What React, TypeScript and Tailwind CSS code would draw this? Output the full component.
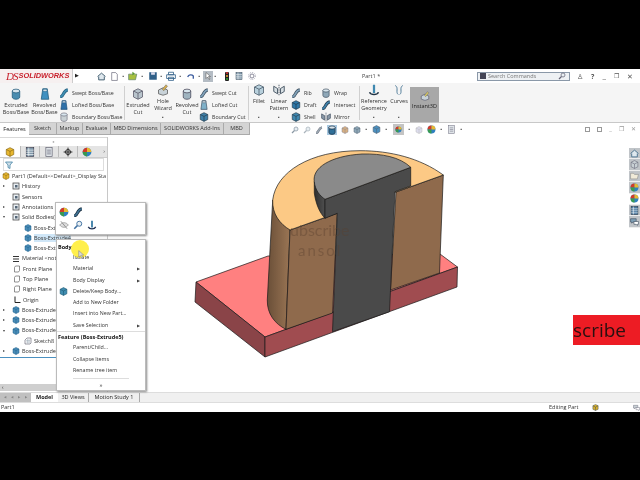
import React from "react";

type K = "cube" | "cyl" | "tube" | "loft" | "hole" | "ball" | "list" | "lens" | "cross" | "flat" | "folder" | "home" | "chat" | "curve" | "mirror" | "eye" | "anchor";
type P = { c?: string; d?: string; k?: K };
const Glyph = ({ c = "#3f7fa8", d = "#1f4f70", k = "cube" }: P) => {
  const box = "w-full h-full block";
  switch (k) {
    case "cyl":
      return <svg viewBox="0 0 16 16" className={box}><path d="M3 4V12C3 16 13 16 13 12V4Z" fill={c} stroke={d} /><ellipse cx="8" cy="4" rx="5" ry="2.5" fill="#d8e6ee" stroke={d} /></svg>;
    case "tube":
      return <svg viewBox="0 0 16 16" className={box}><path d="M2 14C8 14 6 4 14 3" fill="none" stroke={d} strokeWidth="5" /><path d="M2 14C8 14 6 4 14 3" fill="none" stroke={c} strokeWidth="3" /></svg>;
    case "loft":
      return <svg viewBox="0 0 16 16" className={box}><path d="M5 1H11L13 15H3Z" fill={c} stroke={d} /><ellipse cx="8" cy="3" rx="3" ry="1.5" fill="#e8eef2" stroke={d} strokeWidth=".7" /></svg>;
    case "hole":
      return <svg viewBox="0 0 16 16" className={box}><path d="M2 8 8 5 14 8V13L8 15 2 13Z" fill="#c8d2d8" stroke={d} /><path d="M7 7 12 1 14 3 9 9Z" fill={c} stroke={d} strokeWidth=".6" /></svg>;
    case "ball":
      return <svg viewBox="0 0 16 16" className={box}><circle cx="8" cy="8" r="7" fill="#2f80c0" /><path d="M8 8V1A7 7 0 0 0 1 8Z" fill="#d03a2a" /><path d="M8 8V1A7 7 0 0 1 15 8Z" fill="#e8b830" /><path d="M8 8H1A7 7 0 0 0 8 15Z" fill="#3a9a50" /></svg>;
    case "list":
      return <svg viewBox="0 0 16 16" className={box}><rect x="2" y="1" width="12" height="14" fill={c} stroke={d} /><path d="M6 1V15M2 5H14M2 8.5H14M2 12H14" stroke="#fff" /></svg>;
    case "lens":
      return <svg viewBox="0 0 16 16" className={box}><circle cx="10" cy="6" r="4" fill="#e8eef2" stroke={d} strokeWidth="1.5" /><path d="M7 9 2 14" stroke={d} strokeWidth="2.4" /></svg>;
    case "cross":
      return <svg viewBox="0 0 16 16" className={box}><circle cx="8" cy="8" r="4" fill="none" stroke="#222" strokeWidth="1.5" /><path d="M8 1V15M1 8H15" stroke="#222" strokeWidth="1.5" /></svg>;
    case "flat":
      return <svg viewBox="0 0 16 16" className={box}><rect x="3" y="1" width="10" height="14" fill="#dfe4e8" stroke={d} /><path d="M5 5H11M5 8H11M5 11H11" stroke={d} /></svg>;
    case "folder":
      return <svg viewBox="0 0 16 16" className={box}><path d="M1 4H6L8 6H15L13 14H1Z" fill={c} stroke={d} /></svg>;
    case "home":
      return <svg viewBox="0 0 16 16" className={box}><path d="M1 8 8 2 15 8M3 8V14H13V8" fill="#dfe8ee" stroke={d} strokeWidth="1.5" /></svg>;
    case "chat":
      return <svg viewBox="0 0 16 16" className={box}><path d="M1 3H11V9H5L3 11V9H1Z" fill={c} stroke={d} /><path d="M7 8H15V13H13V15L11 13H7Z" fill="#fff" stroke={d} /></svg>;
    case "curve":
      return <svg viewBox="0 0 16 16" className={box}><path d="M3 2C8 5 3 11 7 14M13 2C8 5 13 11 9 14" fill="none" stroke={d} strokeWidth="1.2" /></svg>;
    case "mirror":
      return <svg viewBox="0 0 16 16" className={box}><path d="M1 3 6 6V13L1 10ZM15 3 10 6V13L15 10Z" fill={c} stroke={d} /><path d="M8 1V15" stroke={d} strokeDasharray="2 1" /></svg>;
    case "eye":
      return <svg viewBox="0 0 16 16" className={box}><path d="M1 8C5 3 11 3 15 8C11 13 5 13 1 8Z" fill="#ddd" stroke="#888" /><path d="M3 2 13 14" stroke="#888" strokeWidth="1.4" /></svg>;
    case "anchor":
      return <svg viewBox="0 0 16 16" className={box}><path d="M8 1V12" stroke={c} strokeWidth="3" /><path d="M2 11C4 15 12 15 14 11" fill="none" stroke={d} strokeWidth="2" /></svg>;
    default:
      return <svg viewBox="0 0 16 16" className={box}><path d="M8 1 14 4 14 12 8 15 2 12 2 4Z" fill={c} stroke={d} strokeWidth="1" /><path d="M2 4 8 7 14 4M8 7V15" fill="none" stroke={d} strokeWidth="1" /></svg>;
  }
};
const Dot = ({ m = "" }: { m?: string }) => <span className={`${m} w-[3px] shrink-0 text-[5px] leading-[5px] text-[#555] text-center`}>▪</span>;
const I = ({ c, d, k, s = "w-[10px] h-[10px]" }: P & { s?: string }) => (
  <span className={`${s} shrink-0 block`}><Glyph c={c} d={d} k={k} /></span>
);
const Big = ({ w, lines, c, d, k, dot, pt = "pt-[5px]" }: P & { w: string; lines: string[]; dot?: boolean; pt?: string }) => (
  <div className={`${w} ${pt} shrink-0 h-full flex flex-col items-center`}>
    <I c={c} d={d} k={k} s="w-[12px] h-[12px]" />
    <div className="mt-[2px] text-center leading-[6.8px] whitespace-nowrap">
      {lines.map((l) => <div key={l}>{l}</div>)}
    </div>
    {dot && <div className="mt-auto mb-[2px] flex"><Dot /></div>}
  </div>
);
const Col = ({ w, items }: { w: string; items: [string, string, string, K][] }) => (
  <div className={`${w} shrink-0 flex flex-col gap-[2px] pt-[5px] h-full text-[5.25px]`}>
    {items.map(([t, c, d, k]) => (
      <div key={t} className="h-[10px] flex items-center gap-[3px] whitespace-nowrap"><I c={c} d={d} k={k} />{t}</div>
    ))}
  </div>
);
const Sep = () => <div className="w-px h-[34px] self-center bg-[#d0d0d0] shrink-0" />;

const tabs: [string, string][] = [
  ["Sketch", "w-[28px]"], ["Markup", "w-[26px]"], ["Evaluate", "w-[28px]"],
  ["MBD Dimensions", "w-[50px]"], ["SOLIDWORKS Add-Ins", "w-[63px]"], ["MBD", "w-[26px]"],
];

type RowIcon = "folder" | "cube" | "plane" | "part" | "origin" | "mat" | "sketch";
const Row = ({ ind, arrow, icon, text, sel }: { ind: string; arrow?: string; icon: RowIcon; text: string; sel?: boolean }) => (
  <div className={`h-[10.3px] flex items-center whitespace-nowrap ${ind}`}>
    {arrow && <span className="w-[9px] shrink-0 text-[4px] text-[#444]">{arrow}</span>}
    <span className="w-[8px] h-[8px] shrink-0 block mr-[2px]">
      {icon === "cube" && <Glyph c="#4a8db8" d="#1f5f88" />}
      {icon === "part" && <Glyph c="#e8b830" d="#806010" />}
      {icon === "folder" && <svg viewBox="0 0 16 16" className="w-full h-full"><rect x="2" y="2" width="12" height="12" fill="#e8eef2" stroke="#444" strokeWidth="1.5" /><rect x="6" y="6" width="5" height="5" fill="#567" /></svg>}
      {icon === "plane" && <svg viewBox="0 0 16 16" className="w-full h-full"><path d="M5 2H13V11L11 14H3V5Z" fill="#fff" stroke="#555" strokeWidth="1.3" /></svg>}
      {icon === "sketch" && <svg viewBox="0 0 16 16" className="w-full h-full"><path d="M6 2H14V12L12 14H2V6Z" fill="#fff" stroke="#556" strokeWidth="1.2" /><path d="M4 7H12M4 10H12M7 4V13M10 4V13" stroke="#89a" strokeWidth=".8" /></svg>}
      {icon === "origin" && <svg viewBox="0 0 16 16" className="w-full h-full"><path d="M4 1V13H15" fill="none" stroke="#222" strokeWidth="2" /></svg>}
      {icon === "mat" && <svg viewBox="0 0 16 16" className="w-full h-full"><path d="M2 3H14M2 8H14M2 13H14" stroke="#333" strokeWidth="2" /></svg>}
    </span>
    <span className={sel ? "bg-[#cfe6f7]" : ""}>{text}</span>
  </div>
);

const Item = ({ t, arrow, icon }: { t: string; arrow?: boolean; icon?: boolean }) => (
  <div className="h-[11.3px] flex items-center pl-[16px] pr-[5px] whitespace-nowrap relative text-[5.3px]">
    {icon && <span className="absolute left-[2px] w-[9px] h-[9px]"><Glyph c="#3f8db0" d="#1d5570" /></span>}
    <span className="flex-1">{t}</span>
    {arrow && <span className="text-[4px] text-[#444]">▶</span>}
  </div>
);

const side: [string, string, K][] = [
  ["#dfe8ee", "#3f6a88", "home"], ["#c8d0d4", "#667", "cube"], ["#f0ead8", "#888", "folder"],
  ["#c8a840", "#665", "ball"], ["", "", "ball"], ["#4878a0", "#234", "list"], ["#7f9fb5", "#345", "chat"],
];

export default function App() {
  return (
    <div className="w-[640px] h-[480px] bg-black flex flex-col pt-[69px] pb-[68px] font-['Open_Sans',sans-serif] text-[5.5px] text-[#333] overflow-hidden">
      <div className="flex-1 bg-white flex flex-col min-h-0 blur-[0.35px]">
        {/* title bar */}
        <div className="h-[14px] shrink-0 bg-white flex items-center">
          <div className="w-[73px] h-full shrink-0 bg-[#f6f0f0] flex items-center pl-[6px] border-r border-[#ccc]">
            <span className="text-[#c8202c] italic text-[11px] font-['Liberation_Serif',serif] tracking-[-1px] leading-none">DS</span>
            <span className="text-[#c8202c] italic text-[7.4px] font-bold font-['Liberation_Sans',sans-serif] ml-[1px] leading-none">SOLIDWORKS</span>
          </div>
          <span className="ml-[2px] w-[5px] text-[5px] text-[#222]">▶</span>
          <div className="flex items-center">
            <I k="home" d="#2b4a5e" s="ml-[17px] w-[9px] h-[9px]" />
            <svg viewBox="0 0 16 16" className="ml-[4px] w-[9px] h-[9px]"><path d="M3 1H10L13 4V15H3Z" fill="#fff" stroke="#667" strokeWidth="1.2" /></svg>
            <Dot m="ml-[3px]" />
            <svg viewBox="0 0 16 16" className="ml-[3px] w-[10px] h-[10px]"><path d="M1 5H14L12 14H1Z" fill="#a8c040" stroke="#576" strokeWidth="1" /><path d="M7 1 11 4 7 7Z" fill="#5a9a30" /></svg>
            <Dot m="ml-[3px]" />
            <svg viewBox="0 0 16 16" className="ml-[4px] w-[10px] h-[10px]"><rect x="2" y="2" width="12" height="12" fill="#2f5f88" /><rect x="5" y="2" width="6" height="4" fill="#dde" /></svg>
            <Dot m="ml-[2px]" />
            <svg viewBox="0 0 16 16" className="ml-[3px] w-[10px] h-[10px]"><path d="M4 2H12V6H4ZM1 6H15V12H1ZM4 10H12V15H4Z" fill="#fff" stroke="#2f5f88" strokeWidth="1.3" /></svg>
            <Dot m="ml-[3px]" />
            <svg viewBox="0 0 16 16" className="ml-[4px] w-[9px] h-[9px]"><path d="M3 9A6 6 0 0 1 13 7V12" fill="none" stroke="#3f5fa0" strokeWidth="2.4" /></svg>
            <Dot m="ml-[3px]" />
            <div className="ml-[2px] w-[10px] h-[11px] bg-[#b4bcc4] flex items-center justify-center">
              <svg viewBox="0 0 16 16" className="w-[8px] h-[8px]"><path d="M4 1V13L7 10 10 15 12 14 9 9H13Z" fill="#fff" stroke="#444" strokeWidth="1" /></svg>
            </div>
            <Dot m="ml-px" />
            <span className="ml-[8px] w-[4px] h-[9px] rounded-[1px] bg-[#222] flex flex-col items-center justify-around">
              <span className="w-[2px] h-[2px] rounded-full bg-[#d33]" /><span className="w-[2px] h-[2px] rounded-full bg-[#ea3]" /><span className="w-[2px] h-[2px] rounded-full bg-[#3a3]" />
            </span>
            <I k="list" c="#7f98aa" d="#345" s="ml-[6px] w-[8px] h-[8px]" />
            <svg viewBox="0 0 16 16" className="ml-[5px] w-[8px] h-[8px]"><circle cx="8" cy="8" r="4" fill="none" stroke="#889" strokeWidth="2" /><circle cx="8" cy="8" r="7" fill="none" stroke="#889" strokeWidth="1.4" strokeDasharray="2 2" /></svg>
          </div>
          <span className="ml-[106px] w-[18px] shrink-0 whitespace-nowrap text-[#444]">Part1 *</span>
          <div className="ml-[97px] w-[93px] h-[9px] shrink-0 border border-[#8a98a8] bg-[#eef1f4] flex items-center text-[#777]">
            <span className="w-[6px] h-[6px] bg-[#445] mx-[2px]" />
            <span>Search Commands</span>
            <I k="lens" d="#667" s="ml-auto mr-[3px] w-[8px] h-[8px]" />
          </div>
          <div className="flex-1 flex items-center justify-around px-[3px] text-[#555] text-[8px] leading-none">
            <span className="text-[7px]">♙</span><span className="text-[7px] font-bold">?</span><span>_</span><span className="text-[6px]">❐</span><span className="text-[7px]">✕</span>
          </div>
        </div>

        {/* ribbon */}
        <div className="h-[40px] shrink-0 bg-[#f5f5f5] flex pl-[2px] border-b border-[#c8c8c8] leading-[7px]">
          <Big w="w-[28px]" lines={["Extruded", "Boss/Base"]} c="#4a8db0" d="#205a7a" k="cyl" />
          <Big w="w-[29px]" lines={["Revolved", "Boss/Base"]} c="#3f90c0" d="#205a7a" k="loft" />
          <Col w="w-[65px]" items={[["Swept Boss/Base", "#3f8db0", "#205a7a", "tube"], ["Lofted Boss/Base", "#2f70a8", "#1a4a70", "loft"], ["Boundary Boss/Base", "#c8d0d4", "#667", "cyl"]]} />
          <Sep />
          <Big w="w-[26px]" lines={["Extruded", "Cut"]} c="#b8c4cc" d="#556" k="cube" />
          <Big w="w-[24px]" lines={["Hole", "Wizard"]} c="#d8b050" d="#555" k="hole" dot pt="pt-[1px]" />
          <Big w="w-[24px]" lines={["Revolved", "Cut"]} c="#9fb4c0" d="#445" k="cyl" />
          <Col w="w-[49px]" items={[["Swept Cut", "#7fa0b8", "#345", "tube"], ["Lofted Cut", "#7fb0c8", "#345", "loft"], ["Boundary Cut", "#3f80a8", "#234", "cube"]]} />
          <Sep />
          <Big w="w-[20px]" lines={["Fillet"]} c="#b8d0dc" d="#456" dot pt="pt-[1px]" />
          <Big w="w-[20px]" lines={["Linear", "Pattern"]} c="#d8e0e4" d="#234" k="mirror" dot pt="pt-[1px]" />
          <div className="w-[2px] shrink-0" />
          <Col w="w-[30px]" items={[["Rib", "#7f9fb5", "#345", "tube"], ["Draft", "#2f78a8", "#234", "cube"], ["Shell", "#3f88b0", "#234", "cube"]]} />
          <Col w="w-[38px]" items={[["Wrap", "#8fa8b8", "#345", "cyl"], ["Intersect", "#3f80a8", "#234", "tube"], ["Mirror", "#8898a8", "#345", "mirror"]]} />
          <Sep />
          <Big w="w-[28px]" lines={["Reference", "Geometry"]} c="#3f88b0" d="#234" k="anchor" dot pt="pt-[1px]" />
          <Big w="w-[22px]" lines={["Curves"]} d="#3f6f90" k="curve" dot pt="pt-[1px]" />
          <div className="w-[29px] shrink-0 bg-[#a8a8a8] flex flex-col items-center pt-[4px] mt-[4px] text-[#222]">
            <I c="#d8c860" d="#556" k="hole" />
            <span className="mt-[2px]">Instant3D</span>
          </div>
        </div>

        {/* tabs + view toolbar */}
        <div className="h-[14px] shrink-0 flex">
          <div className="flex h-[12px]">
            <div className="w-[29px] bg-white flex items-center justify-center text-[#222]">Features</div>
            {tabs.map(([t, w]) => (
              <div key={t} className={`${w} bg-[#d4d4d4] border-r border-[#aaa] border-b flex items-center justify-center whitespace-nowrap`}>{t}</div>
            ))}
          </div>
          <div className="ml-[41px] flex items-center gap-[4px] h-[13px]">
            <I k="lens" d="#8a98a4" s="w-[8px] h-[8px]" />
            <I k="lens" d="#aab4bc" s="w-[8px] h-[8px]" />
            <I k="tube" c="#9aa8b0" d="#778" s="w-[8px] h-[8px]" />
            <span className="w-[10px] h-[10px] bg-[#a8c8e0] flex"><I k="cyl" c="#2f6f98" d="#123" s="w-[10px] h-[10px]" /></span>
            <I c="#d8b080" d="#889" s="w-[8px] h-[8px]" />
            <I c="#8fa8b8" d="#567" s="w-[8px] h-[8px]" />
            <Dot />
            <I c="#4a90c0" d="#567" s="w-[9px] h-[9px]" />
            <Dot />
            <span className="ml-[1px] w-[11px] h-[11px] bg-[#c4c4c4] flex items-center justify-center"><I c="#555" d="#333" k="ball" s="w-[7px] h-[7px]" /></span>
            <Dot />
            <I c="#dde" d="#bbb" s="w-[8px] h-[8px]" />
            <I k="ball" s="w-[9px] h-[9px]" />
            <Dot />
            <I c="#b8c4cc" d="#778" k="flat" s="w-[9px] h-[9px]" />
            <Dot />
          </div>
          <div className="ml-auto mr-[4px] flex items-center gap-[7px] text-[#999] text-[6px] h-[13px]">
            <span className="w-[5px] h-[5px] border border-[#999]" /><span className="w-[5px] h-[5px] border border-[#999]" /><span>_</span><span>❐</span><span>✕</span>
          </div>
        </div>

        {/* main */}
        <div className="flex-1 min-h-0 flex relative">
          <div className="w-[108px] shrink-0 border-r border-[#c8c8c8] flex flex-col">
            <div className="h-[9px] shrink-0 border-t border-[#d8d8d8] flex items-center justify-center text-[#aaa] text-[4px]">●</div>
            <div className="h-[12px] shrink-0 flex bg-[#e4e4e4] border-b border-[#ccc]">
              <span className="w-[20px] bg-white flex items-center justify-center"><I c="#e8b830" d="#806010" /></span>
              <span className="w-[19px] border-l border-[#bbb] flex items-center justify-center"><I k="list" c="#7f98aa" d="#334" /></span>
              <span className="w-[19px] border-l border-[#bbb] flex items-center justify-center"><I k="flat" d="#556" /></span>
              <span className="w-[19px] border-l border-[#bbb] flex items-center justify-center"><I k="cross" /></span>
              <span className="w-[19px] border-l border-[#bbb] flex items-center justify-center"><I k="ball" /></span>
              <span className="ml-auto mr-[2px] self-center text-[#555] text-[6px]">›</span>
            </div>
            <div className="h-[13px] shrink-0 mx-[3px] border border-[#ddd] flex items-center pl-[1px]">
              <svg viewBox="0 0 16 16" className="w-[8px] h-[8px]"><path d="M1 2H15L10 8V15L6 13V8Z" fill="#cfe0ea" stroke="#3f7fa0" strokeWidth="1.5" /></svg>
            </div>
            <div className="flex-1 min-h-0 overflow-hidden">
              <Row ind="pl-[2px]" icon="part" text="Part1 (Default<<Default>_Display Sta" />
              <Row ind="pl-[3px]" arrow="▸" icon="folder" text="History" />
              <Row ind="pl-[12px]" icon="folder" text="Sensors" />
              <Row ind="pl-[3px]" arrow="▸" icon="folder" text="Annotations" />
              <Row ind="pl-[3px]" arrow="▾" icon="folder" text="Solid Bodies(3)" />
              <Row ind="pl-[24px]" icon="cube" text="Boss-Extrude1" />
              <Row ind="pl-[24px]" icon="cube" text="Boss-Extrude4" sel />
              <Row ind="pl-[24px]" icon="cube" text="Boss-Extrude5" />
              <Row ind="pl-[12px]" icon="mat" text="Material <not specified>" />
              <Row ind="pl-[13px]" icon="plane" text="Front Plane" />
              <Row ind="pl-[13px]" icon="plane" text="Top Plane" />
              <Row ind="pl-[13px]" icon="plane" text="Right Plane" />
              <Row ind="pl-[13px]" icon="origin" text="Origin" />
              <Row ind="pl-[3px]" arrow="▸" icon="cube" text="Boss-Extrude1" />
              <Row ind="pl-[3px]" arrow="▸" icon="cube" text="Boss-Extrude3" />
              <Row ind="pl-[3px]" arrow="▾" icon="cube" text="Boss-Extrude4" />
              <Row ind="pl-[24px]" icon="sketch" text="Sketch8" />
              <Row ind="pl-[3px]" arrow="▸" icon="cube" text="Boss-Extrude5" />
              <div className="h-px bg-[#4a90c0] mt-[1px]" />
            </div>
            <div className="h-[7px] shrink-0 bg-[#cfcfcf] mb-[1px] text-[5px] leading-[7px] text-[#222] pl-[2px]">‹</div>
          </div>

          {/* viewport */}
          <div className="flex-1 relative bg-white flex flex-col items-end pt-[11px]">
            <svg viewBox="108 137 532 256" className="absolute left-0 top-0 w-[532px] h-[256px]">
              <defs>
                <linearGradient id="side" x1="0" x2="1" y1="0" y2="0">
                  <stop offset="0" stopColor="#6a4f38" />
                  <stop offset="1" stopColor="#9a7554" />
                </linearGradient>
                <linearGradient id="head" x1="0" x2="1" y1="0" y2="0">
                  <stop offset="0" stopColor="#2e2e2e" />
                  <stop offset="1" stopColor="#505050" />
                </linearGradient>
              </defs>
              <g stroke="#1a1a1a" strokeWidth="0.7" strokeLinejoin="round">
                <path d="M196 282 268 256 440 254 457.5 267 265 337Z" fill="#ff8080" />
                <path d="M196 282 265 337 265 357 195 302Z" fill="#8a4448" />
                <path d="M265 337 457.5 267 457 287 265 357Z" fill="#a04c50" />
                <path d="M272.7 200 267.3 300C267 314 275 324 286 329.3L290 230Z" fill="url(#side)" />
                <path d="M290 230 337.3 213.3 332.5 313 286 329.3Z" fill="#8f6a4c" />
                <path d="M396 192 443.3 175 439.5 273 390.5 290Z" fill="#8f6a4c" />
                <path d="M443.3 175C420 158 390 150.7 360 150.7C310 150.7 276 172 272.7 200C272 214 280 224 290 230L396 192Z" fill="#fcc985" />
                <path d="M314.3 181.7V193C316 205 320 213 325 218.3V199.3Z" fill="url(#head)" />
                <path d="M325 199.3 410.7 167.3V186L395 191.7 389.5 311.7 332.5 331.7 337.3 213.3 325 218.3Z" fill="#4a4a4a" />
                <path d="M325 199.3 410.7 167.3C400 157 382 153.5 362 154C330 156 312 168 314.3 181.7C315 190 320 196 325 199.3Z" fill="#8a8a8a" />
              </g>
            </svg>
            <span className="absolute left-[182px] top-[85px] text-[16px] leading-none text-[#5a4030]/40 font-['Lato',sans-serif]">ubscribe</span>
            <span className="absolute left-[190px] top-[106px] text-[15px] leading-none text-[#5a4030]/40 tracking-[2px] font-['Lato',sans-serif]">ansol</span>
            <div className="relative w-[11px] flex flex-col">
              {side.map(([c, d, k], i) => (
                <span key={i} className={`h-[11.4px] flex items-center justify-center border-b border-[#eee] ${i === 4 ? "bg-white" : "bg-[#c0c4c8]"}`}>
                  <I c={c || undefined} d={d || undefined} k={k} s="w-[9px] h-[9px]" />
                </span>
              ))}
            </div>
            <div className="absolute left-[465px] top-[178px] w-[67px] h-[30px] bg-[#ed1c24] flex items-center text-[19px] leading-none text-[#2a1010] font-['Open_Sans',sans-serif]">scribe</div>
          </div>

          {/* mini toolbar */}
          <div className="absolute left-[55px] top-[65px] w-[91px] h-[33px] bg-white border border-[#bbb] shadow-[1px_1px_2px_#888] grid grid-cols-[repeat(3,13px)] gap-x-[1px] pl-[3px] py-[3px] items-center">
            <I k="ball" />
            <I k="tube" c="#3f7090" d="#123" />
            <span />
            <I k="eye" />
            <I k="lens" d="#3f70a0" />
            <I k="anchor" c="#3f80a8" d="#235" />
          </div>

          {/* context menu */}
          <div className="absolute left-[56px] top-[102px] w-[90px] h-[152px] bg-white border border-[#bbb] shadow-[1px_1px_2px_#888] pt-px">
            <div className="h-[11.3px] flex items-center pl-[1px] font-bold text-[#111]">Body</div>
            <Item t="Isolate" />
            <Item t="Material" arrow />
            <Item t="Body Display" arrow />
            <Item t="Delete/Keep Body..." icon />
            <Item t="Add to New Folder" />
            <Item t="Insert into New Part..." />
            <Item t="Save Selection" arrow />
            <div className="h-[11.3px] flex items-center pl-[1px] font-bold text-[#111] border-t border-[#ddd]">Feature (Boss-Extrude5)</div>
            <Item t="Parent/Child..." />
            <Item t="Collapse Items" />
            <Item t="Rename tree item" />
            <div className="h-px bg-[#ddd] mx-[16px] mt-[1px]" />
            <div className="text-center text-[6px] leading-[12px] text-[#333]">»</div>
          </div>
          <div className="absolute left-[71px] top-[103px] w-[18px] h-[18px] rounded-full bg-[#ffe800]/70" />
          <svg viewBox="0 0 16 16" className="absolute left-[77px] top-[113px] w-[9px] h-[9px]"><path d="M3 1V13L6 10 9 15 11 14 8 9H12Z" fill="#d8d8d8" stroke="#888" strokeWidth="1" /></svg>
        </div>

        {/* bottom tabs */}
        <div className="h-[11px] shrink-0 flex bg-[#f0f0f0] border-y border-[#ddd] text-[#222]">
          <div className="w-[31px] bg-[#c0c0c0] flex items-center justify-around px-[1px] text-[3px] text-[#888]"><span>◀</span><span>◀</span><span>▶</span><span>▶</span></div>
          <div className="w-[27px] bg-white flex items-center justify-center font-bold">Model</div>
          <div className="w-[31px] flex items-center justify-center border-r border-[#aaa]">3D Views</div>
          <div className="w-[51px] flex items-center justify-center border-r border-[#aaa]">Motion Study 1</div>
        </div>
        {/* status */}
        <div className="h-[9px] shrink-0 bg-white flex items-center pl-[1px]">
          <span className="w-[14px]">Part1</span>
          <span className="ml-[534px] w-[30px] whitespace-nowrap">Editing Part</span>
          <span className="ml-[13px] w-[7px] h-[7px]"><Glyph c="#d8b030" d="#345" /></span>
          <span className="ml-[34px] w-[7px] h-[7px]"><Glyph k="chat" c="#c8d0d4" d="#667" /></span>
        </div>
      </div>
    </div>
  );
}
